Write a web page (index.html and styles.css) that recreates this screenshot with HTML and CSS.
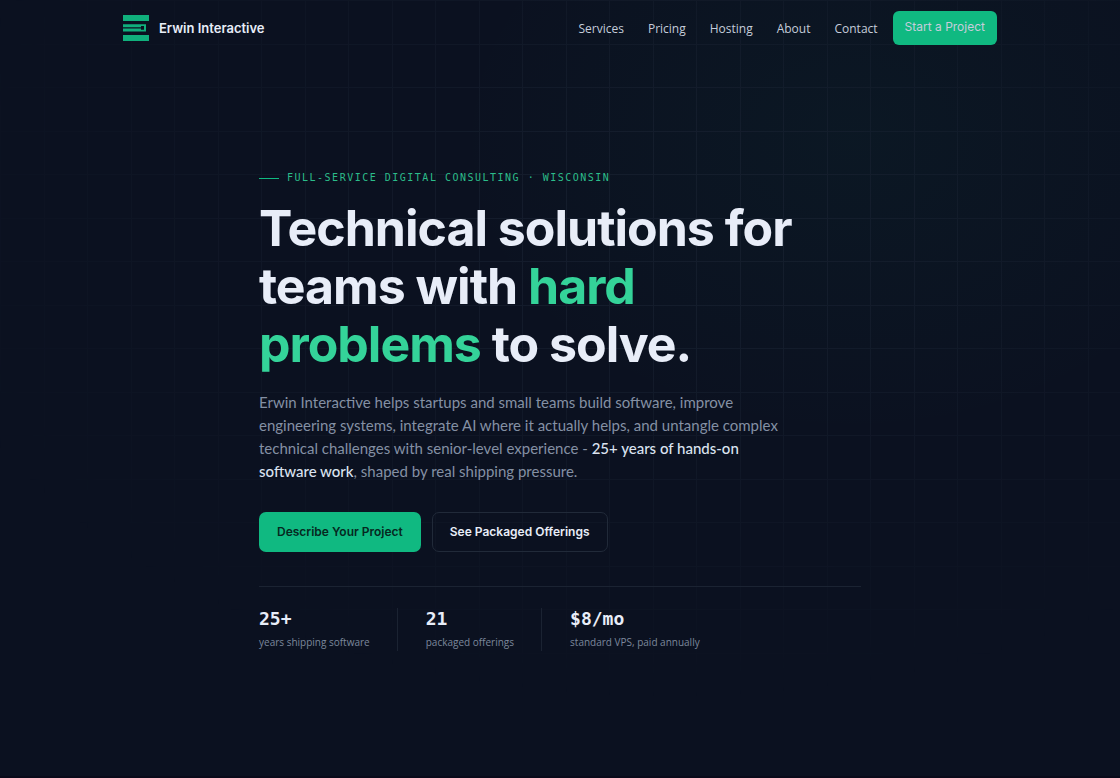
FILE: index.html
```html
<!DOCTYPE html>
<html lang="en">
<head>
  <meta charset="UTF-8" />
  <meta name="viewport" content="width=device-width, initial-scale=1" />
  <title>Erwin Interactive</title>
  <link rel="stylesheet" href="styles.css">
</head>
<body>
  <div class="page">
    <header class="site-header">
      <a class="brand" href="#">
        <svg class="brand-mark" viewBox="0 0 26 26" aria-hidden="true">
          <path d="M0 0h26v6H0zM0 20h26v6H0z" />
          <path d="M0 9.3h23v7.2H0v-3h18v1.2h3v-3.6h-3v1.2H0z" />
        </svg>
        <span>Erwin Interactive</span>
      </a>
      <nav class="site-nav">
        <a href="#services">Services</a>
        <a href="#pricing">Pricing</a>
        <a href="#hosting">Hosting</a>
        <a href="#about">About</a>
        <a href="#contact">Contact</a>
        <a class="nav-cta" href="#start">Start a Project</a>
      </nav>
    </header>

    <main class="hero">
      <p class="eyebrow">Full-Service Digital Consulting · Wisconsin</p>
      <h1>Technical solutions for teams with <em>hard problems</em> to solve.</h1>
      <p class="lead">
        Erwin Interactive helps startups and small teams build software, improve
        engineering systems, integrate AI where it actually helps, and untangle complex
        technical challenges with senior-level experience - <strong>25+ years of hands-on
        software work</strong>, shaped by real shipping pressure.
      </p>
      <div class="actions">
        <a class="btn btn-primary" href="#contact">Describe Your Project</a>
        <a class="btn btn-outline" href="#pricing">See Packaged Offerings</a>
      </div>
      <div class="stats">
        <div class="stat">
          <span class="stat-value">25+</span>
          <span class="stat-label">years shipping software</span>
        </div>
        <div class="stat">
          <span class="stat-value">21</span>
          <span class="stat-label">packaged offerings</span>
        </div>
        <div class="stat">
          <span class="stat-value">$8/mo</span>
          <span class="stat-label">standard VPS, paid annually</span>
        </div>
      </div>
    </main>
  </div>
</body>
</html>
```
FILE: styles.css
```css
* {
  box-sizing: border-box;
}
body {
  margin: 0;
  background: #0a0a1a;
  color: #e8edf8;
  font-family: "Open Sans", sans-serif;
  font-size: 12px;
}
a {
  color: inherit;
  text-decoration: none;
}
h1,
p {
  margin: 0;
}

.page {
  position: relative;
  isolation: isolate;
  min-height: calc(100vh - 2px);
  background:
    radial-gradient(ellipse 400px 300px at 76% 18%, rgba(16, 185, 129, 0.04), transparent),
    #0b1120;
}
/* faded grid behind the hero */
.page::before {
  content: "";
  position: absolute;
  inset: 0;
  z-index: -1;
  background-image:
    linear-gradient(90deg, #1b2434 1px, transparent 1px, transparent 44px, #1b2434 44px, #1b2434 45px, transparent 45px),
    linear-gradient(#1b2434 1px, transparent 1px, transparent 44px, #1b2434 44px, #1b2434 45px, transparent 45px);
  background-size: 87px 87px;
  opacity: 0.6;
  -webkit-mask-image: radial-gradient(ellipse 68% 60% at 60% 30%, #000 20%, transparent 100%);
  mask-image: radial-gradient(ellipse 68% 60% at 60% 30%, #000 20%, transparent 100%);
}

.site-header {
  display: flex;
  align-items: center;
  justify-content: space-between;
  max-width: 874px;
  margin: 0 auto;
  padding: 11px 0;
}
.brand {
  display: flex;
  align-items: center;
  gap: 10px;
  font-family: Inter, sans-serif;
  font-size: 13px;
  font-weight: 600;
}
.brand-mark {
  width: 26px;
  height: 26px;
  fill: #10b07c;
}
.site-nav {
  display: flex;
  align-items: center;
  gap: 24px;
  color: #c5cddb;
}
.nav-cta {
  margin-left: -9px;
  padding: 8px 12px 10px;
  border-radius: 6px;
  background: #10b981;
  font-family: Inter, sans-serif;
  line-height: 16px;
}

.hero {
  max-width: 602px;
  margin: 0 auto;
  padding: 114px 0 80px;
}
.eyebrow {
  display: flex;
  align-items: center;
  gap: 8px;
  margin-bottom: 13px;
  color: #2bbd8a;
  font-family: "DejaVu Sans Mono", monospace;
  font-size: 10px;
  line-height: 16px;
  letter-spacing: 0.15em;
  text-transform: uppercase;
}
.eyebrow::before {
  content: "";
  width: 20px;
  height: 1px;
  background: #10b981;
}
h1 {
  max-width: 560px;
  margin-bottom: 18px;
  font-family: Inter, sans-serif;
  font-size: 50px;
  font-weight: 700;
  line-height: 58px;
  letter-spacing: -0.02em;
}
h1 em {
  color: #34d399;
  font-style: normal;
}
.lead {
  max-width: 520px;
  margin-bottom: 29px;
  color: #8490a4;
  font-family: Lato, sans-serif;
  font-size: 15px;
  line-height: 23px;
}
.lead strong {
  color: #dbe3f0;
  font-weight: 500;
}

.actions {
  display: flex;
  gap: 11px;
  margin-bottom: 34px;
}
.btn {
  padding: 11px 17px;
  border: 1px solid transparent;
  border-radius: 7px;
  font-family: Inter, sans-serif;
  font-size: 12px;
  font-weight: 600;
  line-height: 16px;
}
.btn-primary {
  background: #10b981;
  color: #06281f;
}
.btn-outline {
  border-color: #212a39;
}

.stats {
  display: flex;
  padding-top: 21px;
  border-top: 1px solid #1b2332;
}
.stat {
  display: flex;
  flex-direction: column;
  padding-right: 27px;
}
.stat + .stat {
  padding-left: 28px;
  border-left: 1px solid #1b2332;
}
.stat-value {
  font-family: "DejaVu Sans Mono", monospace;
  font-size: 18px;
  font-weight: 700;
  line-height: 22px;
}
.stat-label {
  margin-top: 3px;
  color: #7c889c;
  font-size: 10px;
  line-height: 18px;
}
```
